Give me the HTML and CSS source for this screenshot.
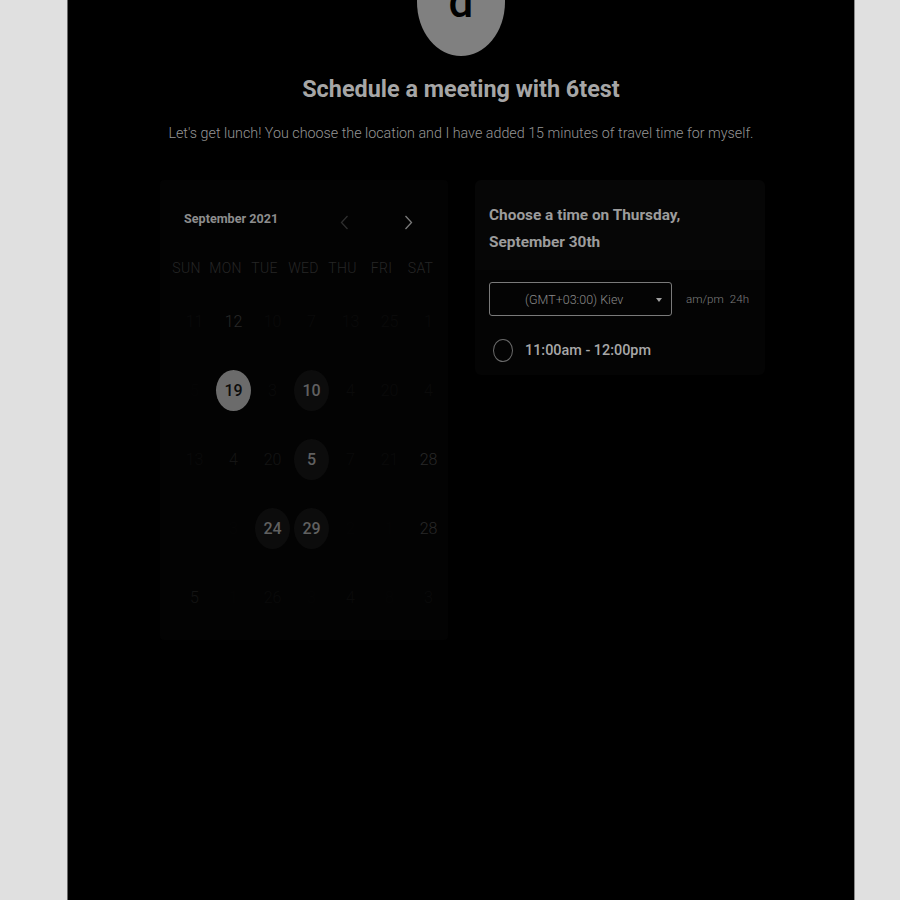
FILE: index.html
```html
<!DOCTYPE html>
<html>
<head>
<meta charset="utf-8">
<link rel="stylesheet" href="styles.css">
</head>
<body>
<div class="page">
  <div class="avatar"><span>d</span></div>
  <h1 class="title">Schedule a meeting with 6test</h1>
  <p class="subtitle">Let's get lunch! You choose the location and I have added 15 minutes of travel time for myself.</p>
  <div class="main">
    <div class="cal">
      <div class="cal-head">
        <div class="month">September 2021</div>
        <button class="nav prev"><svg width="9" height="15" viewBox="0 0 9 15"><path d="M7.5 1 L1.5 7.5 L7.5 14" fill="none" stroke="currentColor" stroke-width="1.3"/></svg></button>
        <button class="nav next"><svg width="9" height="15" viewBox="0 0 9 15"><path d="M1.5 1 L7.5 7.5 L1.5 14" fill="none" stroke="currentColor" stroke-width="1.3"/></svg></button>
      </div>
      <div class="dow">
        <span>SUN</span><span>MON</span><span>TUE</span><span>WED</span><span>THU</span><span>FRI</span><span>SAT</span>
      </div>
      <div class="dates">
        <span class="d f1">11</span><span class="d f3">12</span><span class="d f1">10</span><span class="d f1">7</span><span class="d f1">13</span><span class="d f1">25</span><span class="d f1">1</span>
        <span class="d f0">5</span><span class="d sel">19</span><span class="d f1">3</span><span class="d av">10</span><span class="d f1">4</span><span class="d f1">20</span><span class="d f1">4</span>
        <span class="d f1">13</span><span class="d f2">4</span><span class="d f2">20</span><span class="d av">5</span><span class="d f1">7</span><span class="d f1">21</span><span class="d f3">28</span>
        <span class="d f0"></span><span class="d f0">3</span><span class="d av">24</span><span class="d av">29</span><span class="d f0">2</span><span class="d f0">1</span><span class="d f3">28</span>
        <span class="d f2">5</span><span class="d f0">1</span><span class="d f1">26</span><span class="d f0">3</span><span class="d f1">4</span><span class="d f0">8</span><span class="d f1">3</span>
      </div>
    </div>
    <div class="slots">
      <div class="slots-head">Choose a time on Thursday,<br>September 30th</div>
      <div class="tz-row">
        <div class="select">(GMT+03:00) Kiev<span class="caret"></span></div>
        <div class="fmt"><span>am/pm</span><span>24h</span></div>
      </div>
      <div class="slot"><span class="radio"></span><span class="time">11:00am - 12:00pm</span></div>
    </div>
  </div>
</div>
</body>
</html>
```

FILE: styles.css
```css
html, body {
  margin: 0;
  padding: 0;
  background: #e0e0e0;
  font-family: Roboto, "Liberation Sans", sans-serif;
}
.page {
  width: 786px;
  height: 900px;
  margin-left: 67px;
  background: #000;
  border-left: 1px solid #6a6a6a;
  border-right: 1px solid #8a8a8a;
  overflow: hidden;
}
.avatar {
  width: 88px;
  height: 108px;
  margin: -52px auto 0;
  border-radius: 50%;
  background: #808080;
  text-align: center;
  box-sizing: border-box;
  padding-top: 32px;
}
.avatar span {
  display: block;
  font-size: 44px;
  line-height: 44px;
  font-weight: 500;
  color: #000;
}
.title {
  margin: 17px 0 0;
  text-align: center;
  font-size: 23.4px;
  line-height: 32px;
  font-weight: 700;
  color: #a6a6a6;
}
.subtitle {
  margin: 18px 0 0;
  text-align: center;
  font-size: 14.3px;
  line-height: 20px;
  font-weight: 300;
  color: #959595;
}
.main {
  display: flex;
  gap: 27px;
  margin: 37px 0 0 92px;
  align-items: flex-start;
}
.cal {
  width: 288px;
  height: 460px;
  box-sizing: border-box;
  padding: 24px 0 0 7px;
  background: #030303;
  border-radius: 4px;
}
.cal-head {
  display: flex;
  align-items: center;
  height: 28px;
  padding-left: 17px;
}
.month {
  flex: 1;
  font-size: 12.6px;
  font-weight: 700;
  color: #8d8d8d;
}
.nav {
  width: 32px;
  height: 28px;
  padding: 8px 0 0;
  border: 0;
  background: none;
  display: flex;
  justify-content: center;
  align-items: center;
}
.prev { color: #2e2e2e; margin-right: 32px; }
.next { color: #7a7a7a; margin-right: 24px; }
.dow {
  display: grid;
  grid-template-columns: repeat(7, 39px);
  height: 30px;
  margin-top: 21px;
  align-items: center;
  justify-items: center;
  font-size: 14px;
  font-weight: 300;
  color: #262626;
  letter-spacing: 0.3px;
}
.dates {
  display: grid;
  grid-template-columns: repeat(7, 39px);
  grid-auto-rows: 69px;
  margin-top: 4px;
  padding-left: 8px;
  align-items: center;
  justify-items: center;
}
.d {
  width: 35px;
  height: 41px;
  border-radius: 50%;
  display: flex;
  align-items: center;
  justify-content: center;
  font-size: 16px;
  font-weight: 300;
}
.f0 { color: #050505; }
.f1 { color: #0a0a0a; }
.f2 { color: #141414; }
.f3 { color: #282828; }
.sel {
  background: #6b6b6b;
  color: #0c0c0c;
  font-weight: 500;
}
.av {
  background: #0c0c0c;
  color: #606060;
  font-weight: 500;
}
.slots {
  width: 290px;
  box-sizing: border-box;
  padding: 0 0 13px;
  background: #040404;
  border-radius: 6px;
}
.slots-head {
  padding: 22px 14px 14px;
  background: #060606;
  border-radius: 6px 6px 0 0;
  font-size: 15.4px;
  line-height: 27px;
  font-weight: 700;
  color: #9c9c9c;
}
.tz-row {
  display: flex;
  align-items: center;
  margin-top: 12px;
  padding-left: 14px;
}
.select {
  position: relative;
  width: 183px;
  height: 34px;
  box-sizing: border-box;
  border: 1px solid #7a7a7a;
  border-radius: 3px;
  display: flex;
  align-items: center;
  padding-left: 35px;
  font-size: 12.5px;
  font-weight: 300;
  color: #8a8a8a;
}
.caret {
  position: absolute;
  right: 9px;
  top: 15px;
  border-left: 3.5px solid transparent;
  border-right: 3.5px solid transparent;
  border-top: 4px solid #a0a0a0;
}
.fmt {
  display: flex;
  gap: 6px;
  margin-left: 14px;
  font-size: 11.6px;
  font-weight: 300;
  color: #7d7d7d;
}
.slot {
  display: flex;
  align-items: center;
  margin-top: 22px;
  padding-left: 18px;
  height: 24px;
}
.radio {
  width: 20px;
  height: 23px;
  box-sizing: border-box;
  border: 1px solid #6a6a6a;
  border-radius: 50%;
}
.time {
  margin-left: 12px;
  font-size: 14.4px;
  font-weight: 500;
  color: #a8a8a8;
}
```
